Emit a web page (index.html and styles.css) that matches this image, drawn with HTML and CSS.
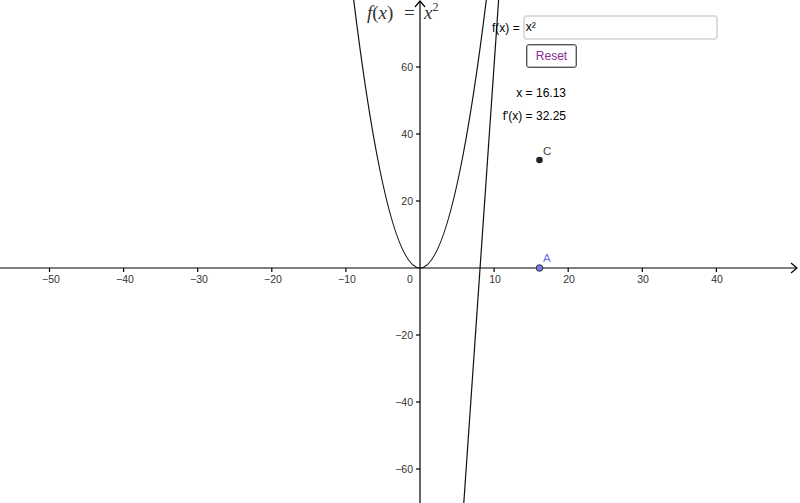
FILE: index.html
```html
<!DOCTYPE html>
<html>
<head>
  <meta charset="UTF-8"/>
  <title>Derivative</title>
  <link rel="stylesheet" href="styles.css">
</head>
<body>
  <div id="ui_applet" class="applet">
    <svg class="graph" width="800" height="503" viewBox="0 0 800 503">
      <!-- axes -->
      <g class="axis">
        <line x1="0" y1="268" x2="797" y2="268"/>
        <polyline points="791,263 797,268 791,273" fill="none"/>
        <line x1="420" y1="503" x2="420" y2="1"/>
        <polyline points="415,7 420,1 425,7" fill="none"/>
        <line x1="49.5" y1="268" x2="49.5" y2="272"/>
        <line x1="123.6" y1="268" x2="123.6" y2="272"/>
        <line x1="197.7" y1="268" x2="197.7" y2="272"/>
        <line x1="271.8" y1="268" x2="271.8" y2="272"/>
        <line x1="345.9" y1="268" x2="345.9" y2="272"/>
        <line x1="494.1" y1="268" x2="494.1" y2="272"/>
        <line x1="568.2" y1="268" x2="568.2" y2="272"/>
        <line x1="642.3" y1="268" x2="642.3" y2="272"/>
        <line x1="716.4" y1="268" x2="716.4" y2="272"/>
        <line x1="416" y1="67" x2="420" y2="67"/>
        <line x1="416" y1="134" x2="420" y2="134"/>
        <line x1="416" y1="201" x2="420" y2="201"/>
        <line x1="416" y1="335" x2="420" y2="335"/>
        <line x1="416" y1="402" x2="420" y2="402"/>
        <line x1="416" y1="469" x2="420" y2="469"/>
      </g>
      <g class="ticklabels xlabels">
        <text x="51" y="283">−50</text>
        <text x="125" y="283">−40</text>
        <text x="199" y="283">−30</text>
        <text x="273" y="283">−20</text>
        <text x="347" y="283">−10</text>
        <text x="410" y="283">0</text>
        <text x="495" y="283">10</text>
        <text x="569" y="283">20</text>
        <text x="643" y="283">30</text>
        <text x="717" y="283">40</text>
      </g>
      <g class="ticklabels ylabels">
        <text x="413" y="71">60</text>
        <text x="413" y="138">40</text>
        <text x="413" y="205">20</text>
        <text x="413" y="339">−20</text>
        <text x="413" y="406">−40</text>
        <text x="413" y="473">−60</text>
      </g>
      <!-- f(x) = x^2 and its tangent at A -->
      <path class="curve" d="M351.8,-15.5 Q420,551.5 488.2,-15.5"/>
      <line class="curve" x1="499.3" y1="-10" x2="463.1" y2="513"/>
      <!-- points -->
      <circle class="pt-c" cx="539.5" cy="160" r="3.3"/>
      <text class="lbl-c" x="543" y="155">C</text>
      <circle class="pt-a" cx="539.5" cy="268" r="3.3"/>
      <text class="lbl-a" x="543" y="262">A</text>
      <!-- formula caption -->
      <text class="caption" y="19">
        <tspan x="367" class="it">f</tspan><tspan>(</tspan><tspan class="it">x</tspan><tspan>)</tspan>
        <tspan x="404">=</tspan>
        <tspan x="424" class="it">x</tspan><tspan class="sup" dy="-8">2</tspan>
      </text>
    </svg>

    <div class="input-row">
      <label for="ui_func">f(x) =</label>
      <div id="ui_func" class="inputbox">x²</div>
    </div>
    <button class="resetbutton">Reset</button>
    <div class="values">
      <div>x = 16.13</div>
      <div>f'(x) = 32.25</div>
    </div>
  </div>
</body>
</html>
```

FILE: styles.css
```css
html, body {
  margin: 0;
  border: 0;
  padding: 0;
  background-color: #fff;
  overflow: hidden;
}

.applet {
  position: relative;
  width: 800px;
  height: 503px;
  font-family: "Liberation Sans", Arial, sans-serif;
  color: #000;
}
.graph {
  display: block;
}

.axis line,
.axis polyline {
  stroke: #000;
  stroke-width: 1.2;
}
.ticklabels text {
  font-family: "Liberation Sans", Arial, sans-serif;
  font-size: 10.5px;
  fill: #333;
}
.xlabels text {
  text-anchor: middle;
}
.ylabels text {
  text-anchor: end;
}
.curve {
  fill: none;
  stroke: #111;
  stroke-width: 1.2;
}

.pt-c {
  fill: #222;
}
.pt-a {
  fill: #7777ee;
  stroke: #333;
  stroke-width: 1;
}
.lbl-c {
  font-size: 11.5px;
  fill: #444;
}
.lbl-a {
  font-size: 11.5px;
  fill: #6a6aee;
}
.caption {
  font-family: "Liberation Serif", "DejaVu Serif", serif;
  font-size: 19px;
  fill: #333;
}
.caption .it {
  font-style: italic;
}
.caption .sup {
  font-size: 12px;
}

/* widgets over the canvas */
.input-row {
  position: absolute;
  left: 492px;
  top: 15px;
  display: flex;
  align-items: center;
  gap: 3px;
  font-size: 12px;
}
.inputbox {
  width: 190px;
  height: 21px;
  line-height: 21px;
  padding-left: 1px;
  border: 2px solid #ddd;
  border-radius: 4px;
  background-color: #fff;
}
.resetbutton {
  position: absolute;
  left: 526px;
  top: 44px;
  width: 51px;
  height: 24px;
  padding: 0;
  border: 1px solid #555;
  border-radius: 3px;
  box-shadow: 0 0 0 1px #bbb inset;
  background-color: #fff;
  color: #8a2a96;
  font-family: "Liberation Sans", Arial, sans-serif;
  font-size: 12px;
}
.values {
  position: absolute;
  right: 234px;
  top: 86px;
  display: flex;
  flex-direction: column;
  align-items: flex-end;
  gap: 9px;
  font-size: 12px;
  line-height: 14px;
}
```
